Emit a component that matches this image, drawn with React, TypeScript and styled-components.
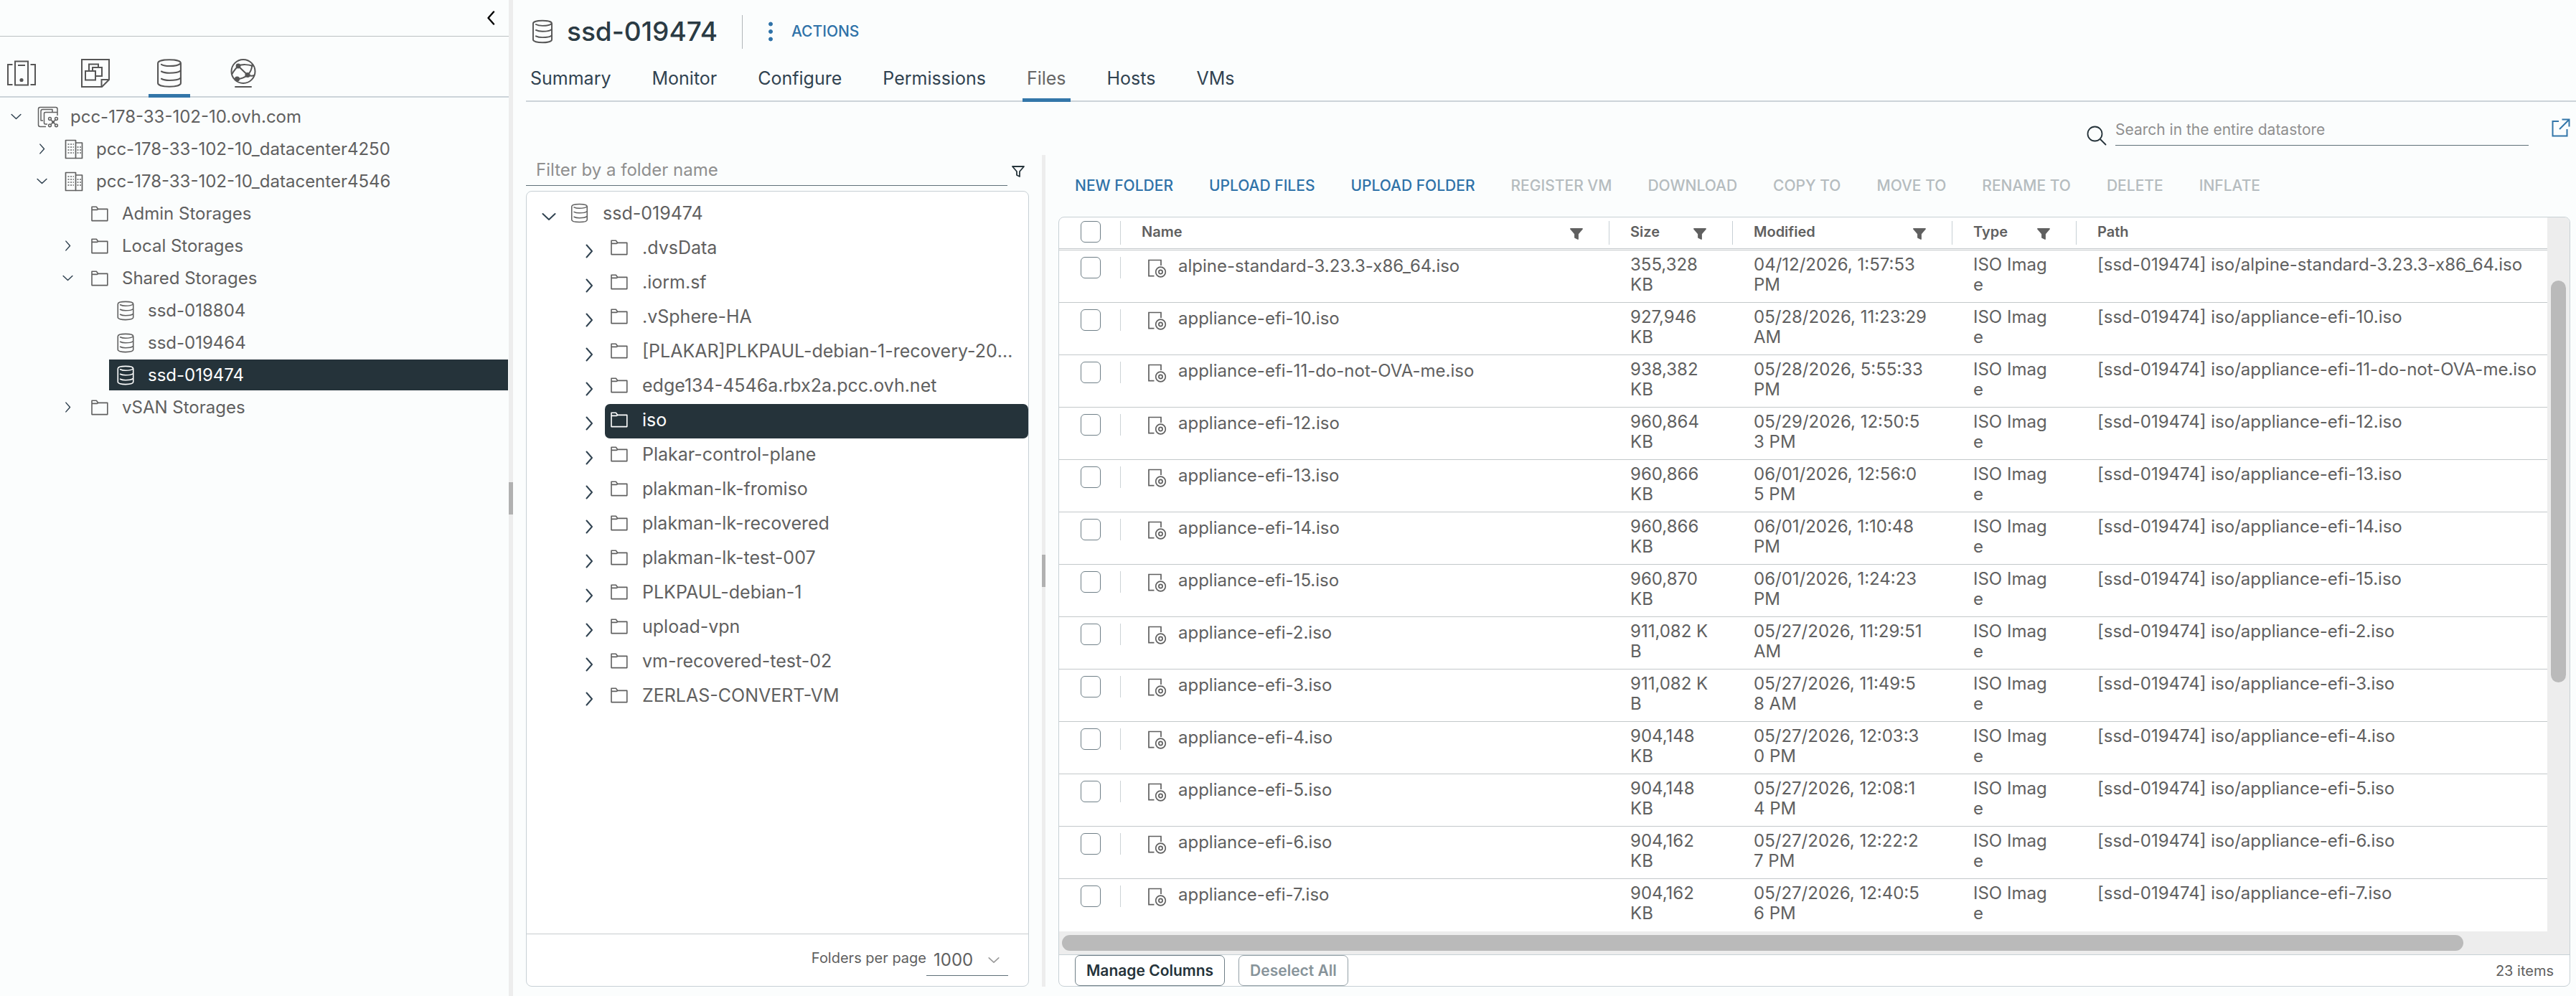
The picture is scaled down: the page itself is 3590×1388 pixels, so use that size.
import React from "react";
import styled, { createGlobalStyle, css } from "styled-components";

const GlobalStyle = createGlobalStyle`
  *, *::before, *::after { box-sizing: border-box; }
  body {
    margin: 0;
    background: #fbfdfd;
    color: #606060;
    font-family: Inter, "Open Sans", sans-serif;
    font-size: 24px;
    line-height: 28px;
  }
  button, input, select { font: inherit; color: inherit; margin: 0; }
  button { border: 0; padding: 0; background: none; cursor: pointer; text-align: left; }
  ul { list-style: none; margin: 0; padding: 0; }
`;

/* ---------- icons ---------- */

const Svg = styled.svg`
  display: block;
  flex: none;
  fill: none;
  stroke: currentColor;
`;

type IconProps = { w: number; h: number; sw?: number };

const DatastoreIcon = ({ w, h, sw = 2 }: IconProps) => (
  <Svg width={w} height={h} viewBox="0 0 26 30" strokeWidth={sw} strokeLinecap="round" aria-hidden="true">
    <path d="M1.5 5C1.5 2.8 6.5 1.5 13 1.5S24.5 2.8 24.5 5V25C24.5 27.2 19.5 28.5 13 28.5S1.5 27.2 1.5 25Z" />
    <path d="M5 6.2C7 7.3 10 7.8 13 7.8C18 7.8 22.5 6.9 24 5.4" />
    <path d="M5 13.2C7 14.3 10 14.8 13 14.8C18 14.8 22.5 13.9 24 12.6" />
    <path d="M5 20.6C7 21.7 10 22.2 13 22.2C18 22.2 22.5 21.3 24 20" />
  </Svg>
);

const FolderIcon = () => (
  <Svg width={24} height={24} viewBox="0 0 24 24" strokeWidth={1.6} strokeLinejoin="round" aria-hidden="true">
    <path d="M1 21.6V2.2H7.4L9.8 5.4H22.8V21.6Z" />
    <path d="M1 6.4H8.4L9.8 5.4" />
  </Svg>
);

const VCenterIcon = () => (
  <Svg width={30} height={30} viewBox="0 0 30 30" strokeWidth={1.5} strokeLinejoin="round" aria-hidden="true">
    <path d="M12 28.5H4Q1.5 28.5 1.5 26V4Q1.5 1.5 4 1.5H25.5Q28 1.5 28 4V13" />
    <path d="M8 20H5V7Q5 4.5 7.5 4.5H21V8" />
    <path d="M14 25H11Q9.5 25 9.5 23V10Q9.5 8.5 11.5 8.5H28" />
    <circle cx="17.5" cy="17.5" r="1.9" />
    <circle cx="26.5" cy="17.5" r="1.9" />
    <circle cx="17.5" cy="26.8" r="1.9" />
    <circle cx="26.5" cy="26.8" r="1.9" />
    <path d="M19 19L25.2 25.4M25.2 19L19 25.4" />
    <circle cx="22" cy="22.2" r="1.2" fill="currentColor" />
  </Svg>
);

const DatacenterIcon = () => (
  <Svg width={26} height={28} viewBox="0 0 26 28" strokeWidth={1.7} strokeLinejoin="round" aria-hidden="true">
    <path d="M1.5 26.5V1.5H15.5V26.5Z" />
    <path d="M15.5 5H24.5V26.5H15.5" />
    <path d="M4.5 7H13M4.5 11H13M4.5 15H13M4.5 19H13M17.5 11H23M17.5 15H23M17.5 19H23" strokeDasharray="2 1.6" />
  </Svg>
);

const HostsIcon = () => (
  <Svg width={40} height={40} viewBox="0 0 40 40" strokeWidth={2} aria-hidden="true">
    <rect x="11" y="3.5" width="18" height="33" />
    <path d="M15 9H25M7.5 8H1V36H7.5M32.5 8H39V36H32.5" />
    <circle cx="20" cy="29.5" r="1.6" fill="currentColor" />
  </Svg>
);

const VmsIcon = () => (
  <Svg width={40} height={40} viewBox="0 0 40 40" strokeWidth={2} aria-hidden="true">
    <path d="M1 1H39V29L29 39H1Z" />
    <path d="M39 29H28.5V39" />
    <path d="M6 17H20V29.5H6ZM11 17V7.5H24V12M16 17V12H29V24H20" />
  </Svg>
);

const NetworkIcon = () => (
  <Svg width={36} height={42} viewBox="0 0 36 42" strokeWidth={2} strokeLinecap="round" aria-hidden="true">
    <circle cx="18" cy="18.5" r="16.5" />
    <path d="M7 40H29" />
    <path d="M11 11C16 8 26 9 31 11M11 11L24 23.5M24 23.5C28 20 30 15 30.5 9M24 23.5C28 25 31 25 33 24M24 23.5C19 28 15 29 9 29M11 11C6 16 3.5 20 2.5 22" />
    <circle cx="11" cy="11" r="2.4" fill="currentColor" />
    <circle cx="24" cy="23.5" r="2.6" fill="currentColor" />
    <circle cx="9.5" cy="29" r="2.6" fill="currentColor" />
  </Svg>
);

const FileDiscIcon = () => (
  <Svg width={26} height={26} viewBox="0 0 26 26" strokeWidth={1.7} aria-hidden="true">
    <path d="M8.5 23.7H1V1.5H18V9" />
    <circle cx="17.5" cy="18" r="6.8" />
    <circle cx="17.5" cy="18" r="2.6" />
  </Svg>
);

const Chevron = ({ dir, size, sw = 2 }: { dir: "left" | "right" | "down"; size: number; sw?: number }) => {
  const paths = { left: "M14 1.5L6.5 10L14 18.5", right: "M6.5 1.5L14 10L6.5 18.5", down: "M1.5 6L10 14L18.5 6" };
  return (
    <Svg width={size} height={size} viewBox="0 0 20 20" strokeWidth={sw} strokeLinecap="round" strokeLinejoin="round" aria-hidden="true">
      <path d={paths[dir]} />
    </Svg>
  );
};

const FunnelIcon = ({ solid }: { solid?: boolean }) => (
  <Svg width={18} height={16} viewBox="0 0 18 16" strokeWidth={1.8} strokeLinejoin="round" aria-hidden="true">
    <path d="M1 1H17L11 8V15L7 13V8Z" fill={solid ? "currentColor" : "none"} />
  </Svg>
);

const SearchIcon = () => (
  <Svg width={28} height={28} viewBox="0 0 28 28" strokeWidth={1.8} strokeLinecap="round" aria-hidden="true">
    <circle cx="11.5" cy="11.5" r="10" />
    <path d="M19.5 19.5L26.5 26.5" />
  </Svg>
);

const PopOutIcon = () => (
  <Svg width={26} height={26} viewBox="0 0 26 26" strokeWidth={2} aria-hidden="true">
    <path d="M10 4H1.5V24.5H21.5V15M14.5 1.5H24.5V11.5M24.5 1.5L11 15" />
  </Svg>
);

const DotsIcon = () => (
  <Svg width={6} height={28} viewBox="0 0 6 28" stroke="none" aria-hidden="true">
    <g fill="currentColor">
      <circle cx="3" cy="3.5" r="2.5" />
      <circle cx="3" cy="14" r="2.5" />
      <circle cx="3" cy="24.5" r="2.5" />
    </g>
  </Svg>
);

/* ---------- shell ---------- */

const Shell = styled.div`
  display: flex;
  min-height: 100vh;
`;

const Sidebar = styled.aside`
  flex: 0 0 709px;
  min-width: 0;
`;

const SidebarTop = styled.div`
  display: flex;
  justify-content: flex-end;
  align-items: center;
  height: 51px;
  padding-right: 15px;
  border-bottom: 1px solid #bcc1c3;
  color: #000;
`;

const InventoryTabs = styled.div`
  display: flex;
  align-items: flex-end;
  gap: 45px;
  height: 85px;
  padding-left: 1px;
  border-bottom: 2px solid #ccd4d9;
`;

const InventoryTab = styled.button<{ $active?: boolean }>`
  display: flex;
  justify-content: center;
  align-items: center;
  width: 58px;
  height: 64px;
  margin-bottom: -2px;
  border-bottom: 5px solid ${(p) => (p.$active ? "#3376a9" : "transparent")};
  color: #565656;
`;

const Splitter = styled.div<{ $width: number }>`
  display: grid;
  grid-template-rows: 1fr 45px 1fr;
  flex: 0 0 ${(p) => p.$width}px;
  background: #ededed;
`;

const SplitterHandle = styled.div`
  grid-row: 2;
  background: #b1b1b1;
`;

const InventoryTree = styled.ul`
  padding-top: 4px;
`;

const InventoryRow = styled.li<{ $level: number }>`
  display: flex;
  align-items: center;
  height: 45px;
  padding: 1px 1px 1px ${(p) => p.$level * 36}px;
`;

const InventoryToggle = styled.button`
  display: flex;
  justify-content: center;
  flex: 0 0 44px;
  color: #314351;
`;

const InventoryNode = styled.button<{ $selected?: boolean }>`
  display: flex;
  align-items: center;
  flex: 1;
  gap: 16px;
  height: 43px;
  padding-left: 8px;
  ${(p) => p.$selected && css`
    background: #25333a;
    color: #fff;
  `}
`;

const IconSlot = styled.span`
  display: flex;
  justify-content: center;
  flex: 0 0 30px;
`;

const Main = styled.main`
  display: flex;
  flex-direction: column;
  flex: 1;
  min-width: 0;
  padding-left: 18px;
  padding-bottom: 13px;
`;

/* ---------- header ---------- */

const TitleBar = styled.header`
  display: flex;
  align-items: center;
  height: 76px;
  padding: 12px 0 0 8px;
  color: #565656;
`;

const Title = styled.h1`
  margin: 0 34px 0 19px;
  font-size: 37px;
  line-height: 48px;
  font-weight: 500;
  color: #2b3b44;
`;

const TitleRule = styled.span`
  width: 1px;
  height: 47px;
  background: #b0b6b9;
`;

const ActionsButton = styled.button`
  display: flex;
  align-items: center;
  gap: 26px;
  margin-left: 36px;
  font-size: 21px;
  font-weight: 500;
  color: #2f72a8;
`;

const ObjectTabs = styled.nav`
  display: flex;
  gap: 45px;
  height: 66px;
  border-bottom: 2px solid #ccd4d9;
`;

const ObjectTab = styled.button<{ $active?: boolean }>`
  height: 66px;
  padding: 4px 6px 0;
  border-bottom: 5px solid ${(p) => (p.$active ? "#3376a9" : "transparent")};
  font-size: 25px;
  color: ${(p) => (p.$active ? "#666" : "#314351")};
`;

const SearchRow = styled.div`
  display: flex;
  justify-content: flex-end;
  height: 74px;
  padding: 17px 8px 0 0;
`;

const SearchLabel = styled.label`
  display: flex;
  align-items: flex-end;
  gap: 12px;
  height: 44px;
  color: #25333a;
`;

const UnderlinedInput = styled.input`
  flex: 1;
  min-width: 0;
  height: 44px;
  border: 0;
  border-bottom: 1px solid #5f7078;
  background: none;
  outline: none;
  padding: 0 14px;
  &::placeholder { color: #8f8f8f; opacity: 1; }
`;

const SearchInput = styled(UnderlinedInput)`
  flex: 0 0 576px;
  padding: 0;
  font-size: 21px;
`;

const PopOut = styled.a`
  margin: 6px 0 0 32px;
  color: #3376a9;
`;

const Split = styled.div`
  display: flex;
  flex: 1;
  min-height: 0;
`;

/* ---------- folder browser ---------- */

const FolderPane = styled.section`
  display: flex;
  flex-direction: column;
  flex: 0 0 719px;
  min-width: 0;
  padding-right: 18px;
`;

const FolderFilter = styled.label`
  display: flex;
  align-items: flex-end;
  gap: 6px;
  height: 43px;
  margin-bottom: 7px;
  padding-right: 6px;
  color: #25333a;
`;

const FilterGlyph = styled.span`
  padding-bottom: 12px;
`;

const Card = styled.div`
  display: flex;
  flex-direction: column;
  flex: 1;
  min-height: 0;
  border: 1px solid #c7d0d5;
  border-radius: 8px;
  background: #fff;
  overflow: hidden;
`;

const FolderList = styled.ul`
  flex: 1;
  padding-top: 8px;
  font-size: 25px;
`;

const FolderRow = styled.li<{ $nested?: boolean }>`
  display: flex;
  height: 48px;
  padding-left: ${(p) => (p.$nested ? 66 : 10)}px;
`;

const FolderToggle = styled.button`
  display: flex;
  justify-content: center;
  align-items: center;
  flex: 0 0 42px;
  padding-top: 6px;
  color: #314351;
`;

const FolderNode = styled.button<{ $selected?: boolean }>`
  display: flex;
  align-items: center;
  gap: 20px;
  flex: 1;
  min-width: 0;
  margin-left: 1px;
  padding: 0 16px 4px 8px;
  border-radius: 7px;
  ${(p) => p.$selected && css`
    background: #25333a;
    color: #fff;
  `}
`;

const FolderName = styled.span`
  overflow: hidden;
  white-space: nowrap;
  text-overflow: ellipsis;
`;

const FolderFooter = styled.div`
  display: flex;
  justify-content: flex-end;
  align-items: center;
  height: 73px;
  padding-right: 28px;
  border-top: 1px solid #c7cccf;
`;

const PageSizeLabel = styled.label`
  font-size: 20px;
  padding-bottom: 6px;
`;

const SelectWrap = styled.span`
  display: grid;
  grid-template-columns: 1fr 28px;
  align-items: center;
  width: 114px;
  height: 44px;
  border-bottom: 1px solid #5f7078;
  color: #9a9a9a;
`;

const PageSize = styled.select`
  grid-area: 1 / 1 / 2 / 3;
  height: 44px;
  padding: 0 0 0 10px;
  border: 0;
  appearance: none;
  background: none;
  color: #606060;
`;

const SelectArrow = styled.span`
  grid-area: 1 / 2;
  pointer-events: none;
`;

/* ---------- file grid ---------- */

const FilesPane = styled.section`
  display: flex;
  flex-direction: column;
  flex: 1;
  min-width: 0;
  padding: 0 8px 0 18px;
`;

const Toolbar = styled.div`
  display: flex;
  align-items: center;
  gap: 50px;
  height: 86px;
  padding-left: 23px;
`;

const ToolbarButton = styled.button`
  font-size: 21px;
  font-weight: 500;
  white-space: nowrap;
  color: #2f72a8;
  &:disabled { color: #b5bcbf; cursor: default; }
`;

const GridBody = styled.div`
  display: flex;
  flex: 1;
  min-height: 0;
`;

const GridScroll = styled.div`
  display: flex;
  flex-direction: column;
  flex: 1;
  min-width: 0;
`;

const TableWrap = styled.div`
  flex: 1 1 0;
  height: 0;
  min-height: 0;
  overflow: hidden;
`;

const Table = styled.table`
  width: 100%;
  table-layout: fixed;
  border-spacing: 0;
`;

const Col = styled.col<{ $width?: number }>`
  width: ${(p) => (p.$width ? `${p.$width}px` : "auto")};
`;

const Th = styled.th`
  height: 46px;
  padding: 0;
  border-bottom: 3px double #c3c8ca;
  font-size: 20px;
  font-weight: 600;
  text-align: left;
`;

const HeadCell = styled.div<{ $last?: boolean }>`
  display: flex;
  align-items: center;
  justify-content: space-between;
  height: 33px;
  padding: 0 36px 3px 29px;
  border-right: ${(p) => (p.$last ? "0" : "1px solid #c7d0d5")};
`;

const HeadFilter = styled.button`
  padding-top: 6px;
`;

const Td = styled.td`
  height: 73px;
  padding: 6px 0 0 29px;
  border-bottom: 1px solid #c3c8ca;
  vertical-align: top;
  white-space: pre;
  tr:last-child > & { border-bottom-color: transparent; }
`;

const CheckTd = styled(Td)`
  padding: 9px 0 0;
`;

const CheckCell = styled.div<{ $head?: boolean }>`
  display: flex;
  align-items: ${(p) => (p.$head ? "flex-start" : "center")};
  height: ${(p) => (p.$head ? 33 : 30)}px;
  padding-left: 30px;
  border-right: 1px solid #cdd3d6;
`;

const Checkbox = styled.input`
  appearance: none;
  width: 28px;
  height: 30px;
  border: 1px solid #6f7f87;
  border-radius: 6px;
  background: #fff;
`;

const NameCell = styled.div`
  display: flex;
  align-items: center;
  gap: 16px;
  padding-left: 9px;
`;

const FileGlyph = styled.span`
  padding-top: 6px;
`;

const HorizontalTrack = styled.div`
  display: grid;
  grid-template-columns: 1952fr 117fr;
  height: 32px;
  padding: 5px 0 5px 4px;
  background: #ededed;
`;

const VerticalTrack = styled.div`
  display: grid;
  grid-template-rows: 88fr 561fr 379fr;
  flex: 0 0 31px;
  padding: 0 5px;
  background: #ededed;
`;

const Thumb = styled.div<{ $row?: number }>`
  grid-row: ${(p) => p.$row ?? 1};
  border-radius: 11px;
  background: #bababa;
`;

const GridFooter = styled.div`
  display: flex;
  align-items: center;
  gap: 19px;
  height: 44px;
  padding: 0 22px;
  border-top: 1px solid #c7d0d5;
  font-size: 20px;
`;

const OutlineButton = styled.button`
  height: 43px;
  padding: 0 15px;
  border: 1px solid #6f7f87;
  border-radius: 7px;
  font-size: 21px;
  font-weight: 600;
  color: #25333a;
  &:disabled { border-color: #93a0a6; color: #87939a; cursor: default; }
`;

const ItemCount = styled.span`
  margin-left: auto;
`;

/* ---------- data ---------- */

type InventoryItem = { level: number; label: string; icon: React.ReactNode; open?: boolean; selected?: boolean };

const smallStore = <DatastoreIcon w={26} h={28} sw={1.7} />;

const inventory: InventoryItem[] = [
  { level: 0, label: "pcc-178-33-102-10.ovh.com", icon: <VCenterIcon />, open: true },
  { level: 1, label: "pcc-178-33-102-10_datacenter4250", icon: <DatacenterIcon />, open: false },
  { level: 1, label: "pcc-178-33-102-10_datacenter4546", icon: <DatacenterIcon />, open: true },
  { level: 2, label: "Admin Storages", icon: <FolderIcon /> },
  { level: 2, label: "Local Storages", icon: <FolderIcon />, open: false },
  { level: 2, label: "Shared Storages", icon: <FolderIcon />, open: true },
  { level: 3, label: "ssd-018804", icon: smallStore },
  { level: 3, label: "ssd-019464", icon: smallStore },
  { level: 3, label: "ssd-019474", icon: smallStore, selected: true },
  { level: 2, label: "vSAN Storages", icon: <FolderIcon />, open: false },
];

const objectTabs = ["Summary", "Monitor", "Configure", "Permissions", "Files", "Hosts", "VMs"];

const folders = [
  ".dvsData",
  ".iorm.sf",
  ".vSphere-HA",
  "[PLAKAR]PLKPAUL-debian-1-recovery-2026-05-28",
  "edge134-4546a.rbx2a.pcc.ovh.net",
  "iso",
  "Plakar-control-plane",
  "plakman-lk-fromiso",
  "plakman-lk-recovered",
  "plakman-lk-test-007",
  "PLKPAUL-debian-1",
  "upload-vpn",
  "vm-recovered-test-02",
  "ZERLAS-CONVERT-VM",
];

const actions = [
  { label: "NEW FOLDER", enabled: true },
  { label: "UPLOAD FILES", enabled: true },
  { label: "UPLOAD FOLDER", enabled: true },
  { label: "REGISTER VM", enabled: false },
  { label: "DOWNLOAD", enabled: false },
  { label: "COPY TO", enabled: false },
  { label: "MOVE TO", enabled: false },
  { label: "RENAME TO", enabled: false },
  { label: "DELETE", enabled: false },
  { label: "INFLATE", enabled: false },
];

const columns = [
  { label: "Name", width: 681 },
  { label: "Size", width: 172 },
  { label: "Modified", width: 306 },
  { label: "Type", width: 173 },
];

const files = [
  { name: "alpine-standard-3.23.3-x86_64.iso", size: "355,328\nKB", modified: "04/12/2026, 1:57:53\nPM" },
  { name: "appliance-efi-10.iso", size: "927,946\nKB", modified: "05/28/2026, 11:23:29\nAM" },
  { name: "appliance-efi-11-do-not-OVA-me.iso", size: "938,382\nKB", modified: "05/28/2026, 5:55:33\nPM" },
  { name: "appliance-efi-12.iso", size: "960,864\nKB", modified: "05/29/2026, 12:50:5\n3 PM" },
  { name: "appliance-efi-13.iso", size: "960,866\nKB", modified: "06/01/2026, 12:56:0\n5 PM" },
  { name: "appliance-efi-14.iso", size: "960,866\nKB", modified: "06/01/2026, 1:10:48\nPM" },
  { name: "appliance-efi-15.iso", size: "960,870\nKB", modified: "06/01/2026, 1:24:23\nPM" },
  { name: "appliance-efi-2.iso", size: "911,082 K\nB", modified: "05/27/2026, 11:29:51\nAM" },
  { name: "appliance-efi-3.iso", size: "911,082 K\nB", modified: "05/27/2026, 11:49:5\n8 AM" },
  { name: "appliance-efi-4.iso", size: "904,148\nKB", modified: "05/27/2026, 12:03:3\n0 PM" },
  { name: "appliance-efi-5.iso", size: "904,148\nKB", modified: "05/27/2026, 12:08:1\n4 PM" },
  { name: "appliance-efi-6.iso", size: "904,162\nKB", modified: "05/27/2026, 12:22:2\n7 PM" },
  { name: "appliance-efi-7.iso", size: "904,162\nKB", modified: "05/27/2026, 12:40:5\n6 PM" },
];

/* ---------- page ---------- */

export default function App() {
  return (
    <>
      <GlobalStyle />
      <Shell>
        <Sidebar>
          <SidebarTop>
            <button aria-label="Collapse navigator"><Chevron dir="left" size={20} sw={2.4} /></button>
          </SidebarTop>
          <InventoryTabs>
            <InventoryTab aria-label="Hosts and clusters"><HostsIcon /></InventoryTab>
            <InventoryTab aria-label="VMs and templates"><VmsIcon /></InventoryTab>
            <InventoryTab $active aria-label="Storage"><DatastoreIcon w={36} h={42} sw={1.5} /></InventoryTab>
            <InventoryTab aria-label="Networking"><NetworkIcon /></InventoryTab>
          </InventoryTabs>
          <InventoryTree>
            {inventory.map((item) => (
              <InventoryRow key={item.label} $level={item.level}>
                <InventoryToggle aria-label={`Toggle ${item.label}`} disabled={item.open === undefined}>
                  {item.open !== undefined && <Chevron dir={item.open ? "down" : "right"} size={15} />}
                </InventoryToggle>
                <InventoryNode $selected={item.selected}>
                  <IconSlot>{item.icon}</IconSlot>
                  {item.label}
                </InventoryNode>
              </InventoryRow>
            ))}
          </InventoryTree>
        </Sidebar>
        <Splitter $width={6}><SplitterHandle /></Splitter>
        <Main>
          <TitleBar>
            <DatastoreIcon w={30} h={34} sw={1.7} />
            <Title>ssd-019474</Title>
            <TitleRule />
            <ActionsButton><DotsIcon />ACTIONS</ActionsButton>
          </TitleBar>
          <ObjectTabs>
            {objectTabs.map((tab) => (
              <ObjectTab key={tab} $active={tab === "Files"}>{tab}</ObjectTab>
            ))}
          </ObjectTabs>
          <SearchRow>
            <SearchLabel>
              <SearchIcon />
              <SearchInput placeholder="Search in the entire datastore" aria-label="Search in the entire datastore" />
            </SearchLabel>
            <PopOut href="#" aria-label="Open in a new window"><PopOutIcon /></PopOut>
          </SearchRow>
          <Split>
            <FolderPane>
              <FolderFilter>
                <UnderlinedInput placeholder="Filter by a folder name" aria-label="Filter by a folder name" />
                <FilterGlyph><FunnelIcon /></FilterGlyph>
              </FolderFilter>
              <Card>
                <FolderList>
                  <FolderRow>
                    <FolderToggle aria-label="Collapse ssd-019474"><Chevron dir="down" size={20} /></FolderToggle>
                    <FolderNode>
                      <DatastoreIcon w={25} h={28} sw={1.6} />
                      <FolderName>ssd-019474</FolderName>
                    </FolderNode>
                  </FolderRow>
                  {folders.map((name) => (
                    <FolderRow key={name} $nested>
                      <FolderToggle aria-label={`Expand ${name}`}><Chevron dir="right" size={20} /></FolderToggle>
                      <FolderNode $selected={name === "iso"}>
                        <FolderIcon />
                        <FolderName>{name}</FolderName>
                      </FolderNode>
                    </FolderRow>
                  ))}
                </FolderList>
                <FolderFooter>
                  <PageSizeLabel htmlFor="page-size">Folders per page</PageSizeLabel>
                  <SelectWrap>
                    <PageSize id="page-size" defaultValue="1000">
                      <option>1000</option>
                      <option>500</option>
                    </PageSize>
                    <SelectArrow><Chevron dir="down" size={16} /></SelectArrow>
                  </SelectWrap>
                </FolderFooter>
              </Card>
            </FolderPane>
            <Splitter $width={5}><SplitterHandle /></Splitter>
            <FilesPane>
              <Toolbar>
                {actions.map((action) => (
                  <ToolbarButton key={action.label} disabled={!action.enabled}>{action.label}</ToolbarButton>
                ))}
              </Toolbar>
              <Card>
                <GridBody>
                  <GridScroll>
                    <TableWrap>
                      <Table>
                        <colgroup>
                          <Col $width={86} />
                          {columns.map((column) => <Col key={column.label} $width={column.width} />)}
                          <Col />
                        </colgroup>
                        <thead>
                          <tr>
                            <Th><CheckCell $head><Checkbox type="checkbox" aria-label="Select all" /></CheckCell></Th>
                            {columns.map((column) => (
                              <Th key={column.label} scope="col">
                                <HeadCell>
                                  {column.label}
                                  <HeadFilter aria-label={`Filter ${column.label}`}><FunnelIcon solid /></HeadFilter>
                                </HeadCell>
                              </Th>
                            ))}
                            <Th scope="col"><HeadCell $last>Path</HeadCell></Th>
                          </tr>
                        </thead>
                        <tbody>
                          {files.map((file) => (
                            <tr key={file.name}>
                              <CheckTd><CheckCell><Checkbox type="checkbox" aria-label={`Select ${file.name}`} /></CheckCell></CheckTd>
                              <Td><NameCell><FileGlyph><FileDiscIcon /></FileGlyph>{file.name}</NameCell></Td>
                              <Td>{file.size}</Td>
                              <Td>{file.modified}</Td>
                              <Td>{"ISO Imag\ne"}</Td>
                              <Td>[ssd-019474] iso/{file.name}</Td>
                            </tr>
                          ))}
                        </tbody>
                      </Table>
                    </TableWrap>
                    <HorizontalTrack><Thumb /></HorizontalTrack>
                  </GridScroll>
                  <VerticalTrack><Thumb $row={2} /></VerticalTrack>
                </GridBody>
                <GridFooter>
                  <OutlineButton>Manage Columns</OutlineButton>
                  <OutlineButton disabled>Deselect All</OutlineButton>
                  <ItemCount>23 items</ItemCount>
                </GridFooter>
              </Card>
            </FilesPane>
          </Split>
        </Main>
      </Shell>
    </>
  );
}
